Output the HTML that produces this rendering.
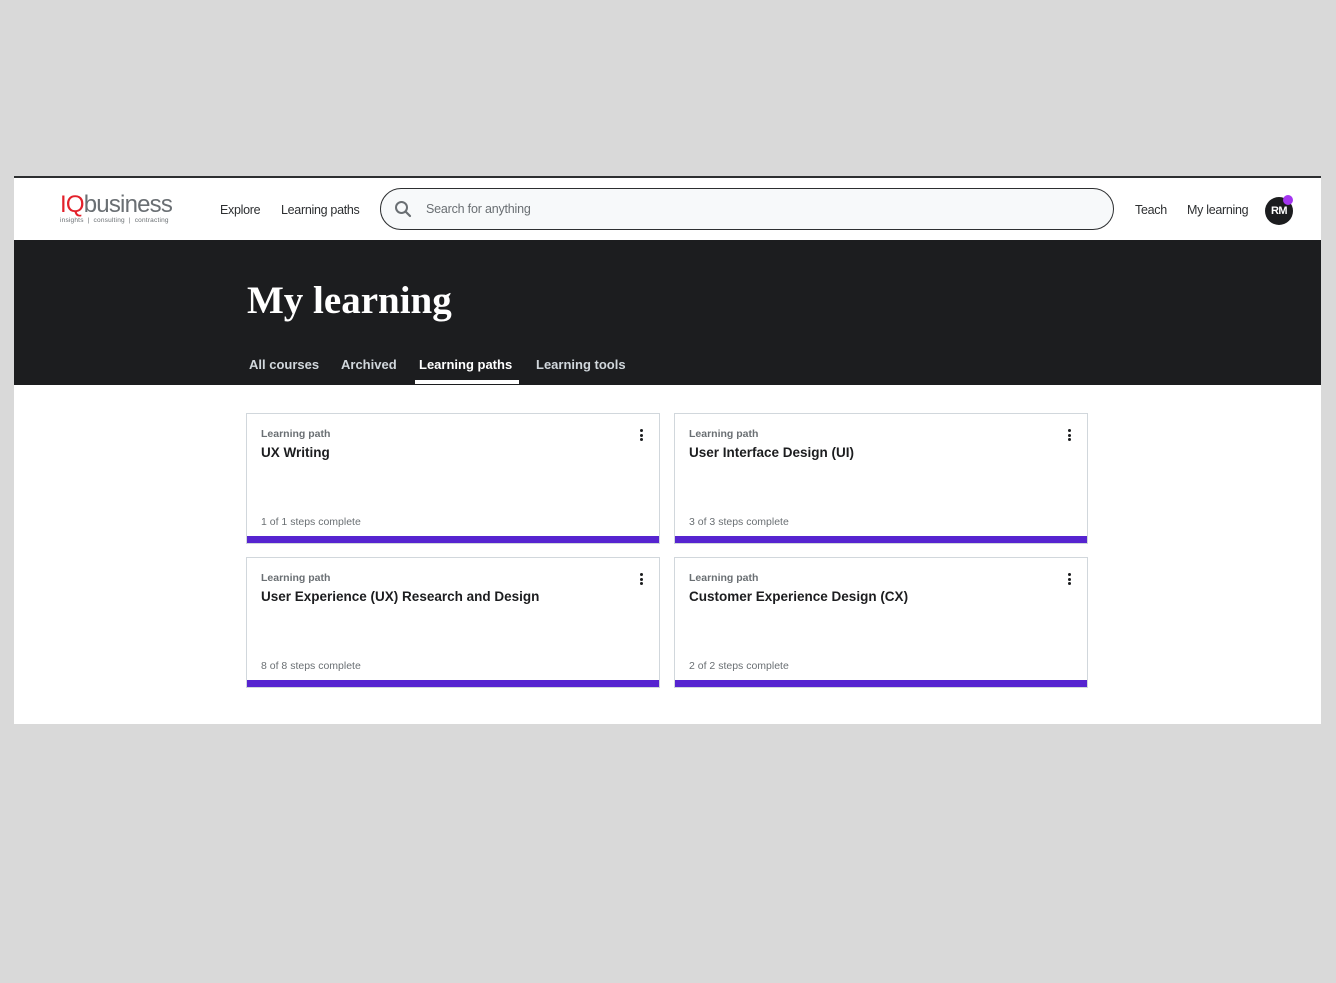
<!DOCTYPE html>
<html><head><meta charset="utf-8"><style>
*{margin:0;padding:0;box-sizing:border-box}
body{width:1336px;height:983px;background:#d9d9d9;font-family:"Liberation Sans",sans-serif;position:relative;overflow:hidden}
.frame{position:absolute;left:14px;top:176px;width:1307px;height:548px;background:#fff;border-top:2px solid #2d2f31}
.hdr{position:absolute;left:0;top:0;width:100%;height:62px;background:#fff}
.logo{position:absolute;left:46px;top:14px}
.logo .big{font-size:24px;line-height:26px;color:#6a6f73;letter-spacing:-0.8px}
.logo .big span{color:#e3202a}
.logo .small{font-size:6.5px;color:#6a6f73;margin-top:-1px;letter-spacing:0.2px}
.nav{position:absolute;top:25px;font-size:12.5px;color:#2d2f31;letter-spacing:-0.3px}
.search{position:absolute;left:366px;top:10px;width:734px;height:42px;border:1px solid #2d2f31;border-radius:21px;background:#f7f9fa}
.search .ph{position:absolute;left:45px;top:13px;font-size:12.5px;color:#6a6f73;letter-spacing:-0.2px}
.search svg{position:absolute;left:13px;top:11px}
.av{position:absolute;left:1251px;top:19px;width:28px;height:28px;border-radius:50%;background:#1c1d1f;color:#fff;font-weight:bold;font-size:11px;text-align:center;line-height:28px;letter-spacing:-0.5px}
.dot{position:absolute;left:1269px;top:17px;width:10px;height:10px;border-radius:50%;background:#a435f0}
.band{position:absolute;left:0;top:62px;width:100%;height:145px;background:#1c1d1f}
.band h1{position:absolute;left:233px;top:38px;font-family:"Liberation Serif",serif;font-weight:bold;color:#fff;font-size:39px;letter-spacing:0px}
.tab{position:absolute;top:117px;color:#d1d7dc;font-weight:bold;font-size:13px}
.tab.on{color:#fff}
.uline{position:absolute;left:401px;top:140px;width:104px;height:4px;background:#fff}
.card{position:absolute;width:414px;height:131px;border:1px solid #d1d7dc;background:#fff}
.card .k{position:absolute;left:14px;top:14px;font-size:10.5px;font-weight:bold;color:#6a6f73}
.card .t{position:absolute;left:14px;top:31px;font-size:13.5px;font-weight:bold;color:#1c1d1f}
.card .s{position:absolute;left:14px;top:102px;font-size:10.5px;color:#6a6f73}
.card .bar{position:absolute;left:0;bottom:0;width:100%;height:7px;background:#5624d0}
.card .m{position:absolute;left:393px;top:15px;width:3px}
.card .m i{display:block;width:3px;height:3px;border-radius:50%;background:#1c1d1f;margin-bottom:1.5px}
</style></head><body>
<div class="frame">
 <div class="hdr">
  <div class="logo"><div class="big"><span>IQ</span>business</div><div class="small">insights &nbsp;|&nbsp; consulting &nbsp;|&nbsp; contracting</div></div>
  <div class="nav" style="left:206px">Explore</div>
  <div class="nav" style="left:267px">Learning paths</div>
  <div class="search"><svg width="18" height="18" viewBox="0 0 18 18"><circle cx="7.5" cy="7.5" r="5.5" fill="none" stroke="#6a6f73" stroke-width="2"/><path d="M11.5 11.5L16 16" stroke="#6a6f73" stroke-width="2.2" stroke-linecap="round"/></svg><div class="ph">Search for anything</div></div>
  <div class="nav" style="left:1121px">Teach</div>
  <div class="nav" style="left:1173px">My learning</div>
  <div class="av">RM</div><div class="dot"></div>
 </div>
 <div class="band">
  <h1>My learning</h1>
  <div class="tab" style="left:235px">All courses</div>
  <div class="tab" style="left:327px">Archived</div>
  <div class="tab on" style="left:405px">Learning paths</div>
  <div class="tab" style="left:522px">Learning tools</div>
  <div class="uline"></div>
 </div>
 <div class="card" style="left:232px;top:235px"><div class="k">Learning path</div><div class="t">UX Writing</div><div class="s">1 of 1 steps complete</div><div class="m"><i></i><i></i><i></i></div><div class="bar"></div></div>
 <div class="card" style="left:660px;top:235px"><div class="k">Learning path</div><div class="t">User Interface Design (UI)</div><div class="s">3 of 3 steps complete</div><div class="m"><i></i><i></i><i></i></div><div class="bar"></div></div>
 <div class="card" style="left:232px;top:379px"><div class="k">Learning path</div><div class="t">User Experience (UX) Research and Design</div><div class="s">8 of 8 steps complete</div><div class="m"><i></i><i></i><i></i></div><div class="bar"></div></div>
 <div class="card" style="left:660px;top:379px"><div class="k">Learning path</div><div class="t">Customer Experience Design (CX)</div><div class="s">2 of 2 steps complete</div><div class="m"><i></i><i></i><i></i></div><div class="bar"></div></div>
</div>
</body></html>
